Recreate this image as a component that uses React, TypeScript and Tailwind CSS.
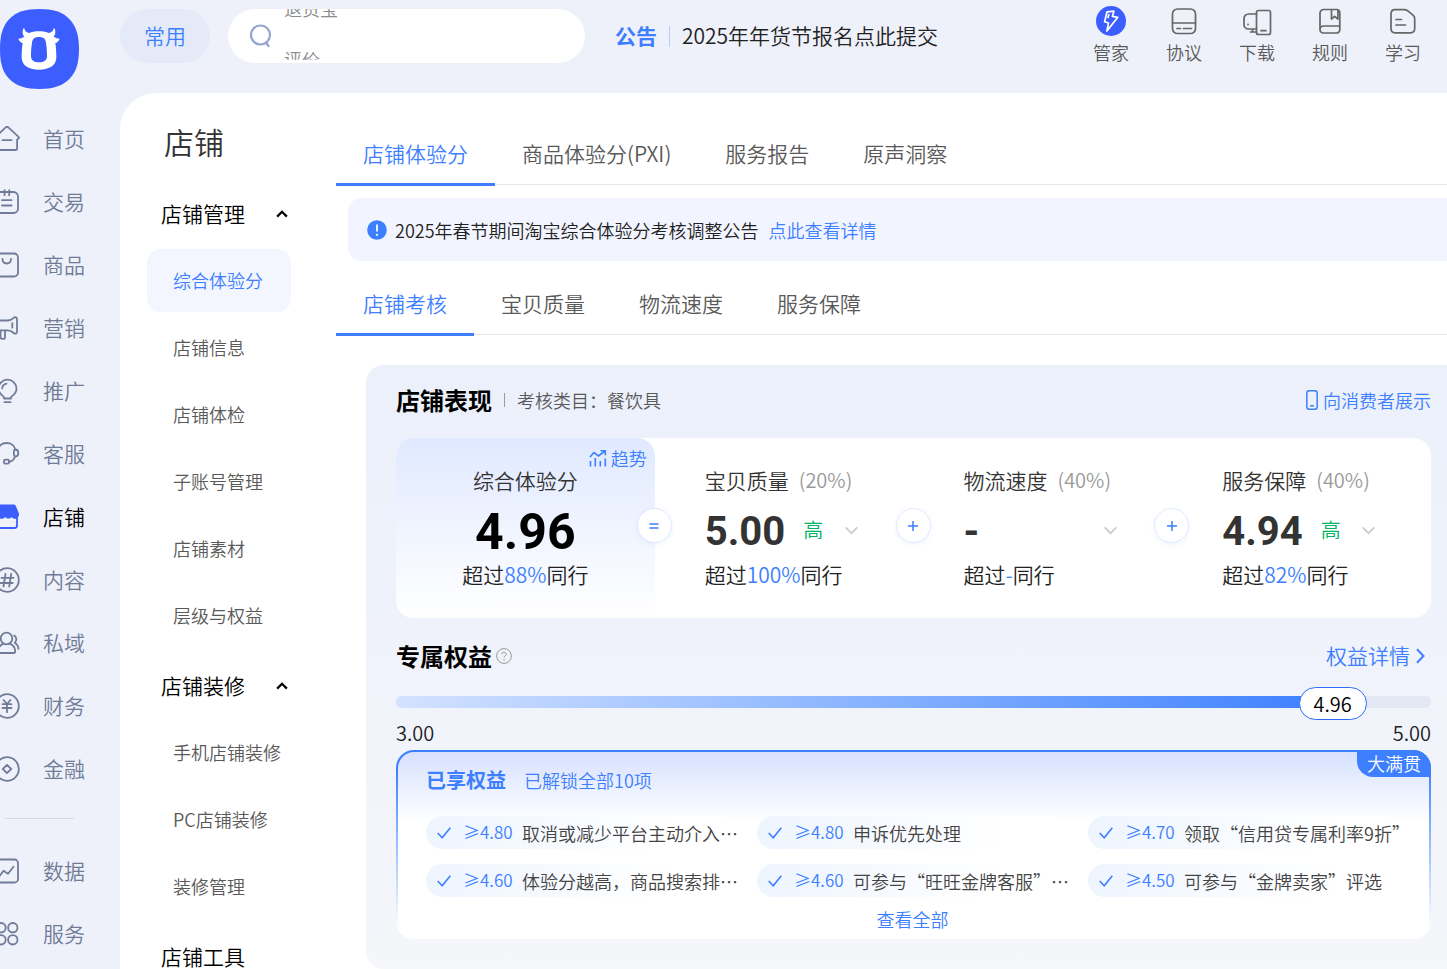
import type { ReactNode } from "react";

type IconProps = { children: ReactNode; className?: string };

function SideIcon({ children, className = "" }: IconProps) {
  return (
    <svg
      viewBox="0 0 26 26"
      className={`h-[26px] w-[26px] shrink-0 ${className}`}
      fill="none"
      stroke="currentColor"
      strokeWidth="1.8"
      strokeLinecap="round"
      strokeLinejoin="round"
      aria-hidden="true"
    >
      {children}
    </svg>
  );
}

function TopIcon({ children }: IconProps) {
  return (
    <svg
      viewBox="0 0 30 30"
      className="h-[30px] w-[30px]"
      fill="none"
      stroke="#666"
      strokeWidth="1.7"
      strokeLinecap="round"
      strokeLinejoin="round"
      aria-hidden="true"
    >
      {children}
    </svg>
  );
}

const sideItems: { label: string; icon: ReactNode; active?: boolean }[] = [
  {
    label: "首页",
    icon: (
      <SideIcon>
        <path d="M2.900 13.300v9a1.700 1.700 0 0 0 1.700 1.700h16.800a1.700 1.700 0 0 0 1.700-1.700v-8.600l1.500-1.300a1 1 0 0 0 0-1.500L14.600 1.700a2.300 2.300 0 0 0-3.200 0L1.400 10.900a1 1 0 0 0 0 1.500z" />
        <path d="M8.500 14.200h9" />
      </SideIcon>
    ),
  },
  {
    label: "交易",
    icon: (
      <SideIcon>
        <rect x="2" y="3" width="22" height="21" rx="4.500" />
        <path d="M10.500 1.200v5M15.200 1.200v5M8 11.200h9.500M8 16.500h9.500" />
      </SideIcon>
    ),
  },
  {
    label: "商品",
    icon: (
      <SideIcon>
        <rect x="2" y="1.500" width="22" height="23" rx="4" />
        <path d="M8.500 7c0 3 1.800 4.500 4.300 4.500S17 10 17 7" />
      </SideIcon>
    ),
  },
  {
    label: "营销",
    icon: (
      <SideIcon>
        <path d="M3 5.500h10.500c2.500 0 4.700-1.200 6.200-2.600 1.300-1.200 3.300-.7 3.300 1V17c0 1.700-2 2.200-3.300 1-1.500-1.400-3.700-2.600-6.200-2.600H3a1.500 1.500 0 0 1-1.500-1.500V7A1.500 1.500 0 0 1 3 5.500zM6.500 15.500v6.700c0 2.300 4.500 2.300 4.500 0v-6.700M18.300 8.200v4.500" />
      </SideIcon>
    ),
  },
  {
    label: "推广",
    icon: (
      <SideIcon>
        <path d="M10 20.500v-1.200c0-1.200-5.500-3-5.500-8.600a9 9 0 0 1 18 0c0 5.600-5.500 7.400-5.500 8.600v1.200zM10.500 24.200h6M8.200 10.500c.2-2.600 1.800-4.300 4.300-4.800" />
      </SideIcon>
    ),
  },
  {
    label: "客服",
    icon: (
      <SideIcon>
        <path d="M4 8.500C5 4.500 8.500 2 12.700 2s7.800 2.500 8.600 6.500M4 8.500H2.800a1 1 0 0 0-1 1V14a1 1 0 0 0 1 1H4zM21.500 8.500c1.800 0 2.800 1.400 2.800 3.500S23.300 15.500 21.500 15.500c-1.300 0-1.700-1.400-1.700-3.500s.4-3.500 1.700-3.500zM21 15.500c-.8 2.800-3 4.800-6 5.500" />
        <rect x="10" y="18.700" width="5" height="4" rx="1.200" />
      </SideIcon>
    ),
  },
  {
    label: "店铺",
    active: true,
    icon: (
      <SideIcon className="text-[#3d5eff]">
        <path
          stroke="none"
          fill="currentColor"
          d="M6.500.5h13c1.300 0 2 .6 2.500 1.700l2.900 7.300c.6 2.500-.9 5-3.400 5.300-1.700.2-3-.6-3.900-1.800-1 1.300-2.500 1.900-4.100 1.500-.9-.2-1.700-.8-2.300-1.500-1 1.300-2.300 2-4 1.800-2.500-.3-6.600-2.800-6-5.300L4 2.200C4.500 1.100 5.200.5 6.500.5z"
        />
        <path d="M3 13v8.500a2.500 2.500 0 0 0 2.500 2.500h15a2.500 2.500 0 0 0 2.500-2.500V13" />
      </SideIcon>
    ),
  },
  {
    label: "内容",
    icon: (
      <SideIcon>
        <circle cx="13" cy="13" r="11.800" />
        <path d="M11.500 7l-2 12.500M17.200 7l-2 12.500M7.500 10.800h12M6.700 16h12" />
      </SideIcon>
    ),
  },
  {
    label: "私域",
    icon: (
      <SideIcon>
        <circle cx="12.500" cy="8.500" r="5.800" />
        <path d="M9.800 13.700C6 15 4 18 4 21.300c0 1 .6 1.700 1.600 1.700h14c1 0 1.600-.7 1.600-1.700 0-3.300-2-6.300-5.900-7.600M20.200 5.500c2.600 1.700 2.800 5 .6 7.300 2.200 1.300 3.400 3.400 3.700 6" />
      </SideIcon>
    ),
  },
  {
    label: "财务",
    icon: (
      <SideIcon>
        <circle cx="13" cy="13" r="11.800" />
        <path d="M9.500 7l3.500 4 3.500-4M8.500 11.200h9M8.500 15h9M13 11.200v8" />
      </SideIcon>
    ),
  },
  {
    label: "金融",
    icon: (
      <SideIcon>
        <circle cx="13" cy="13" r="11.800" />
        <path d="M13 8.800l4.200 4.200-4.200 4.200L8.800 13z" />
      </SideIcon>
    ),
  },
];

const sideItemsBottom: { label: string; icon: ReactNode }[] = [
  {
    label: "数据",
    icon: (
      <SideIcon>
        <rect x="2" y="1.500" width="22" height="23" rx="3.500" />
        <path d="M6 17.500l3.500-4.700 4.500 3 5.500-7" />
      </SideIcon>
    ),
  },
  {
    label: "服务",
    icon: (
      <SideIcon>
        <circle cx="7" cy="6.700" r="4.700" />
        <circle cx="18.800" cy="6.700" r="4.700" />
        <circle cx="7" cy="18.800" r="4.700" />
        <circle cx="18.800" cy="18.800" r="4.700" />
      </SideIcon>
    ),
  },
];

const topItems: { label: string; icon: ReactNode }[] = [
  {
    label: "管家",
    icon: (
      <TopIcon>
        <circle cx="15" cy="15" r="15" fill="#3d5eff" stroke="none" />
        <path
          stroke="#fff"
          strokeWidth="1.7"
          d="M11 5.800l6.900-.6-1.500 5.200 5.300 1L10.900 25l1.600-8-3.900-1.300zM12.800 8.500l-.8 3"
        />
      </TopIcon>
    ),
  },
  {
    label: "协议",
    icon: (
      <TopIcon>
        <rect x="3.500" y="3" width="23" height="24.500" rx="5" />
        <path d="M3.500 17h23M8 22.500h3.500M14.500 22.500h8" />
      </TopIcon>
    ),
  },
  {
    label: "下载",
    icon: (
      <TopIcon>
        <path d="M14.500 8H6.500A4.500 4.500 0 0 0 2 12.500v6A4.500 4.500 0 0 0 6.500 23h8M10.500 23v3M8.500 26h6M6 18.300v.3" />
        <rect x="14.500" y="4.500" width="14" height="24" rx="2" />
        <path d="M19 24.700h5" />
      </TopIcon>
    ),
  },
  {
    label: "规则",
    icon: (
      <TopIcon>
        <path d="M24.800 20.500V6.500a3 3 0 0 0-3-3H8.500A3.500 3.500 0 0 0 5 7v16.500A3.300 3.300 0 0 0 8.300 27h13.200a3.300 3.300 0 0 0 3.300-3.300v-3.200M24.800 20H8.500A3.400 3.400 0 0 0 5 23.500M16.500 3.500V13l3.200-2.700 3.200 2.700V4" />
      </TopIcon>
    ),
  },
  {
    label: "学习",
    icon: (
      <TopIcon>
        <path d="M7 3.700h9.500c1.200 0 2 .3 3 1l5.500 4.500c1.100.9 1.700 2 1.700 3.300v10c0 2.700-1.700 4.300-4.300 4.300H7c-2.600 0-4-1.600-4-4.200V8c0-2.700 1.400-4.300 4-4.300zM8 13.500h5.500M8 19h9.500" />
      </TopIcon>
    ),
  },
];

const menuGroups = [
  {
    title: "店铺管理",
    items: ["综合体验分", "店铺信息", "店铺体检", "子账号管理", "店铺素材", "层级与权益"],
  },
  { title: "店铺装修", items: ["手机店铺装修", "PC店铺装修", "装修管理"] },
  { title: "店铺工具", items: [] },
];

const metrics = [
  { name: "宝贝质量", weight: "20%", score: "5.00", level: "高", beat: "100%", sign: "=" },
  { name: "物流速度", weight: "40%", score: "-", level: "", beat: "-", sign: "+" },
  { name: "服务保障", weight: "40%", score: "4.94", level: "高", beat: "82%", sign: "+" },
];

const benefits = [
  { min: "4.80", text: "取消或减少平台主动介入…" },
  { min: "4.80", text: "申诉优先处理" },
  { min: "4.70", text: "领取“信用贷专属利率9折”" },
  { min: "4.60", text: "体验分越高，商品搜索排…" },
  { min: "4.60", text: "可参与“旺旺金牌客服”…" },
  { min: "4.50", text: "可参与“金牌卖家”评选" },
];

function Logo() {
  return (
    <svg viewBox="0 0 237 240" className="h-20 w-[79px]" role="img" aria-label="千牛">
      <path
        fill="#3d5eff"
        d="M118 0c40 0 70 8 92 32 20 22 27 50 27 88s-7 66-27 88c-22 24-52 32-92 32s-70-8-92-32C6 186 0 158 0 120s6-66 26-88C48 8 78 0 118 0z"
      />
      <path
        fill="#fff"
        d="M72 56c2 8 6 14 15 16 8-3 18-5 30-5s22 2 30 5c9-2 13-8 15-16 6 8 5 20-1 27 6 4 12 5 18 6-3 8-8 12-13 13 2 12 3 28 3 43 0 24-20 37-52 37s-52-13-52-37c0-15 1-31 3-43-5-1-10-5-13-13 6-1 12-2 18-6-6-7-7-19-1-27z"
      />
      <path
        fill="#3d5eff"
        d="M117 84c14 0 20 6 21 18 2 12 3 26 3 38 0 14-9 20-24 20s-24-6-24-20c0-12 1-26 3-38 1-12 7-18 21-18z"
      />
    </svg>
  );
}

function Tabs({ items, label }: { items: string[]; label: string }) {
  return (
    <div role="tablist" aria-label={label} className="flex h-[62px] border-b border-[#e6e8ed]">
      {items.map((t, i) => (
        <button
          key={t}
          type="button"
          role="tab"
          aria-selected={i === 0}
          className={`h-[63px] shrink-0 border-b-3 px-[27px] pt-0.5 text-[21px] ${
            i === 0 ? "border-[#3d7fff] text-[#3d7fff]" : "border-transparent text-[#595959]"
          }`}
        >
          {t}
        </button>
      ))}
    </div>
  );
}

function Chevron({ className, weight = 2 }: { className: string; weight?: number }) {
  return (
    <svg
      viewBox="0 0 16 10"
      className={className}
      fill="none"
      stroke="currentColor"
      strokeWidth={weight}
      aria-hidden="true"
    >
      <path d="M1.500 1.500L8 8l6.500-6.500" />
    </svg>
  );
}

function Sidebar() {
  return (
    <aside className="w-[120px] shrink-0 overflow-hidden pt-[9px]">
      <Logo />
      <nav aria-label="主导航" className="mt-[18px]">
        {sideItems.map((it) => (
          <a
            key={it.label}
            href="#"
            className={`-ml-1.5 flex h-[63px] items-center gap-[23px] text-[21px] ${
              it.active ? "text-black" : "text-[#707c97]"
            }`}
          >
            {it.icon}
            {it.label}
          </a>
        ))}
        <hr className="mt-[18px] mb-5 ml-[5px] w-[69px] border-[#d5d9e0]" />
        {sideItemsBottom.map((it) => (
          <a
            key={it.label}
            href="#"
            className="-ml-1.5 flex h-[63px] items-center gap-[23px] text-[21px] text-[#707c97]"
          >
            {it.icon}
            {it.label}
          </a>
        ))}
      </nav>
    </aside>
  );
}

function Header() {
  return (
    <header className="flex h-[93px] items-start pt-[9px] pr-[26px]">
      <button
        type="button"
        className="h-[54px] w-[90px] shrink-0 rounded-full bg-[#e4eaf8] text-[21px] text-[#3d7fff]"
      >
        常用
      </button>
      <label className="relative ml-[18px] flex h-[54px] w-[357px] shrink-0 items-center rounded-full bg-white pl-[21px]">
        <svg viewBox="0 0 24 24" className="h-6 w-6 shrink-0" fill="none" stroke="#93a5cf" strokeWidth="2.200" strokeLinecap="round" aria-hidden="true">
          <circle cx="11.500" cy="11" r="9.500" />
          <path d="M17 18.500l2.500 3.500" />
        </svg>
        <input type="search" aria-label="搜索" className="h-full min-w-0 flex-1 rounded-full bg-transparent pl-3 text-lg outline-none" />
        <span className="pointer-events-none absolute top-0 left-14 h-[51px] overflow-hidden text-lg text-[#8c8c8c]">
          <span className="-mt-[27px] block leading-[52px]">退货宝</span>
          <span className="block leading-[50px]">评价</span>
        </span>
      </label>
      <div className="ml-[30px] flex h-[54px] items-center text-[21px] whitespace-nowrap">
        <strong className="font-bold text-[#3d7fff]">公告</strong>
        <span className="mx-3 h-[21px] w-px bg-[#b5cdfb]" />
        <a href="#" className="text-[#222]">
          2025年年货节报名点此提交
        </a>
      </div>
      <nav aria-label="快捷入口" className="-mt-[3px] ml-auto flex gap-[37px]">
        {topItems.map((it) => (
          <a key={it.label} href="#" className="flex flex-col items-center text-lg leading-8 text-[#595959]">
            {it.icon}
            {it.label}
          </a>
        ))}
      </nav>
    </header>
  );
}

function ShopMenu() {
  return (
    <nav aria-label="店铺菜单" className="w-[216px] shrink-0 pt-[26px] pl-[27px]">
      <h1 className="pl-[17px] text-[30px] leading-[45px] text-[#333]">店铺</h1>
      <div className="mt-[19px] flex flex-col gap-2">
        {menuGroups.map((g) => (
          <section key={g.title} className="flex flex-col gap-1">
            <button
              type="button"
              className="flex h-[62px] items-center pl-3.5 text-[21px] text-black"
            >
              {g.title}
              {g.items.length > 0 && <Chevron weight={3} className="ml-[31px] h-2 w-3 rotate-180" />}
            </button>
            {g.items.map((it) => (
              <a
                key={it}
                href="#"
                className={`flex h-[63px] w-36 items-center rounded-[14px] pb-0.5 pl-[26px] text-lg whitespace-nowrap ${
                  it === "综合体验分" ? "bg-[#f3f6ff] text-[#3d7fff]" : "text-[#595959]"
                }`}
              >
                {it}
              </a>
            ))}
          </section>
        ))}
      </div>
    </nav>
  );
}

function ScoreCard() {
  return (
    <div className="mt-5 grid grid-cols-4 rounded-[18px] bg-white">
      <div className="relative flex flex-col items-center rounded-[18px] bg-linear-to-b from-[#e0e9ff] to-white pt-[27px] pb-[29px]">
        <a href="#" className="absolute top-[5px] right-2 flex items-center gap-1 text-lg leading-[30px] text-[#3d7fff]">
          <svg viewBox="0 0 18 18" className="h-[18px] w-[18px]" fill="none" stroke="currentColor" strokeWidth="1.600" aria-hidden="true">
            <path d="M1 8l4-4.500 4.500 3.500L16 2M11.500 1.700h4.800v4.500" />
            <path d="M1.500 12v5.500M6.300 9v8.500M11.300 12v5.500M16.300 9.500v8" />
          </svg>
          趋势
        </a>
        <h3 className="text-[21px] leading-[30px] text-[#333]">综合体验分</h3>
        <p className="mt-3 font-[Roboto,sans-serif] text-[50px] leading-[50px] font-bold text-black">4.96</p>
        <p className="mt-0.5 text-[21px] leading-[30px] text-[#222]">
          超过<span className="text-[#3d7fff]">88%</span>同行
        </p>
      </div>
      {metrics.map((m) => (
        <div key={m.name} className="relative pt-[27px] pb-[29px] pl-[50px]">
          <span className="absolute top-[70px] -left-[18px] flex h-[35px] w-[35px] items-center justify-center rounded-full border border-[#e0e9ff] bg-white text-[#3d7fff] shadow-[0_2px_5px_rgba(61,127,255,0.08)]">
            <svg viewBox="0 0 10 10" className="h-2.5 w-2.5" stroke="currentColor" strokeWidth="1.500" role="img" aria-label={m.sign}>
              {m.sign === "=" ? <path d="M.5 3h9M.5 7h9" /> : <path d="M0 5h10M5 0v10" />}
            </svg>
          </span>
          <h3 className="flex items-center gap-2.5 text-[21px] leading-[30px] text-[#333]">
            {m.name}
            <span className="text-[20px] text-[#999]">({m.weight})</span>
          </h3>
          <div className="mt-3 flex h-[50px] w-[154px] items-center">
            <span className="font-[Roboto,sans-serif] text-[40px] font-bold text-[#333]">{m.score}</span>
            <span className="ml-[18px] pb-1 text-[20px] text-[#00b365]">{m.level}</span>
            <button type="button" aria-label={`展开${m.name}`} className="ml-auto pb-1 text-[#ccc]">
              <Chevron className="h-[9px] w-[15px]" />
            </button>
          </div>
          <p className="mt-0.5 text-[21px] leading-[30px] text-[#222]">
            超过<span className="text-[#3d7fff]">{m.beat}</span>同行
          </p>
        </div>
      ))}
    </div>
  );
}

function Benefits() {
  return (
    <div className="relative mt-1 rounded-[18px] bg-linear-to-b from-[#3d7fff] from-10% to-white to-95% p-0.5">
      <div className="rounded-2xl bg-white bg-linear-to-b from-[#d7e1ff] to-white to-38% pt-[13px] pr-[30px] pb-[3px] pl-7">
        <div className="flex h-[30px] items-center gap-[18px] text-[#3d7fff]">
          <h3 className="text-[20px] font-bold">已享权益</h3>
          <span className="text-lg">已解锁全部10项</span>
        </div>
        <ul className="mt-[21px] grid grid-cols-3 gap-x-5 gap-y-[15px]">
          {benefits.map((b) => (
            <li
              key={b.text}
              className="flex h-[33px] items-center rounded-full bg-linear-to-r from-[#eef5ff] to-white to-80% pl-[11px] text-lg whitespace-nowrap"
            >
              <svg viewBox="0 0 14 12" className="h-3 w-3.5 shrink-0 text-[#3d7fff]" fill="none" stroke="currentColor" strokeWidth="1.600" aria-hidden="true">
                <path d="M.7 6l4.500 4.700L13.300.8" />
              </svg>
              <span className="ml-3 w-[49px] shrink-0 text-[17px] text-[#3d7fff]">≥{b.min}</span>
              <span className="ml-2.5 text-[#444]">{b.text}</span>
            </li>
          ))}
        </ul>
        <a href="#" className="mx-auto mt-2 mb-px block w-fit text-lg leading-7 text-[#3d7fff]">
          查看全部
        </a>
      </div>
      <span className="absolute top-0 right-0 rounded-tr-[18px] rounded-bl-[16px] bg-[#3d7fff] px-2.5 text-lg leading-[27px] text-white">
        大满贯
      </span>
    </div>
  );
}

export default function App() {
  return (
    <div className="flex min-h-screen overflow-hidden bg-[#eef1fa] font-['Noto_Sans_CJK_SC',sans-serif] font-[350]">
      <Sidebar />
      <div className="flex min-w-0 flex-1 flex-col">
        <Header />
        <main className="flex flex-1 rounded-tl-[36px] bg-white">
          <ShopMenu />
          <div className="min-w-0 flex-1 pt-[30px]">
            <Tabs label="店铺分析" items={["店铺体验分", "商品体验分(PXI)", "服务报告", "原声洞察"]} />
            <div className="mt-[13px] ml-3 flex h-[63px] items-center rounded-l-[14px] bg-[#f2f5ff] pl-[19px] text-lg text-[#222]">
              <svg viewBox="0 0 20 20" className="mr-2 h-5 w-5 shrink-0" aria-hidden="true">
                <circle cx="10" cy="10" r="9.800" fill="#3d7fff" />
                <path d="M10 4.500v7" stroke="#fff" strokeWidth="1.800" />
                <circle cx="10" cy="14.800" r="1.100" fill="#fff" />
              </svg>
              2025年春节期间淘宝综合体验分考核调整公告
              <a href="#" className="ml-2.5 text-[#3d7fff]">
                点此查看详情
              </a>
            </div>
            <div className="mt-3">
              <Tabs label="考核维度" items={["店铺考核", "宝贝质量", "物流速度", "服务保障"]} />
            </div>
            <section className="mt-[30px] ml-[30px] rounded-l-[18px] bg-linear-to-b from-[#ebf0fb] to-[#f5f6fa] pt-[17px] pr-4 pb-[30px] pl-[30px]">
              <div className="flex h-9 items-center">
                <h2 className="text-[24px] font-bold text-black">店铺表现</h2>
                <span className="mr-3 ml-3 h-3.5 w-px bg-[#999]" />
                <span className="text-lg text-[#595959]">考核类目：餐饮具</span>
                <a href="#" className="ml-auto flex items-center gap-[5px] text-lg text-[#3d7fff]">
                  <svg viewBox="0 0 12 20" className="h-5 w-3" fill="none" stroke="currentColor" strokeWidth="1.500" aria-hidden="true">
                    <rect x=".8" y=".8" width="10.400" height="18.400" rx="2.500" />
                    <path d="M4 15.800h4" />
                  </svg>
                  向消费者展示
                </a>
              </div>
              <ScoreCard />
              <div className="mt-5 flex h-9 items-center">
                <h2 className="text-[24px] font-bold text-black">专属权益</h2>
                <svg viewBox="0 0 16 16" className="ml-1 h-4 w-4" fill="none" stroke="#999" role="img" aria-label="说明">
                  <circle cx="8" cy="8" r="7.400" />
                  <path d="M5.800 6.300c0-3 4.500-2.900 4.500-.2 0 1.700-2.300 1.700-2.300 3.500M8 11v1.500" />
                </svg>
                <a href="#" className="ml-auto flex items-center pr-1.5 text-[21px] text-[#3d7fff]">
                  权益详情
                  <svg viewBox="0 0 9 16" className="ml-1.5 h-4 w-[9px]" fill="none" stroke="currentColor" strokeWidth="2" aria-hidden="true">
                    <path d="M1 1.200L7.500 8 1 14.800" />
                  </svg>
                </a>
              </div>
              <div
                role="progressbar"
                aria-label="体验分"
                aria-valuemin={3}
                aria-valuemax={5}
                aria-valuenow={4.96}
                className="relative mt-[22px] h-3 rounded-full bg-[#e3e7f3]"
              >
                <div className="h-3 w-[90.5%] rounded-full bg-linear-to-r from-[#d3e2ff] to-[#3d7fff]" />
                <span className="absolute -top-[9px] left-[90.5%] flex h-[33px] w-[68px] -translate-x-1/2 items-center justify-center rounded-full border border-[#2f6bff] bg-white text-[20px] text-black">
                  4.96
                </span>
              </div>
              <div className="mt-3 flex h-[26px] items-center justify-between text-[20px] text-[#222]">
                <span>3.00</span>
                <span>5.00</span>
              </div>
              <Benefits />
            </section>
          </div>
        </main>
      </div>
    </div>
  );
}
